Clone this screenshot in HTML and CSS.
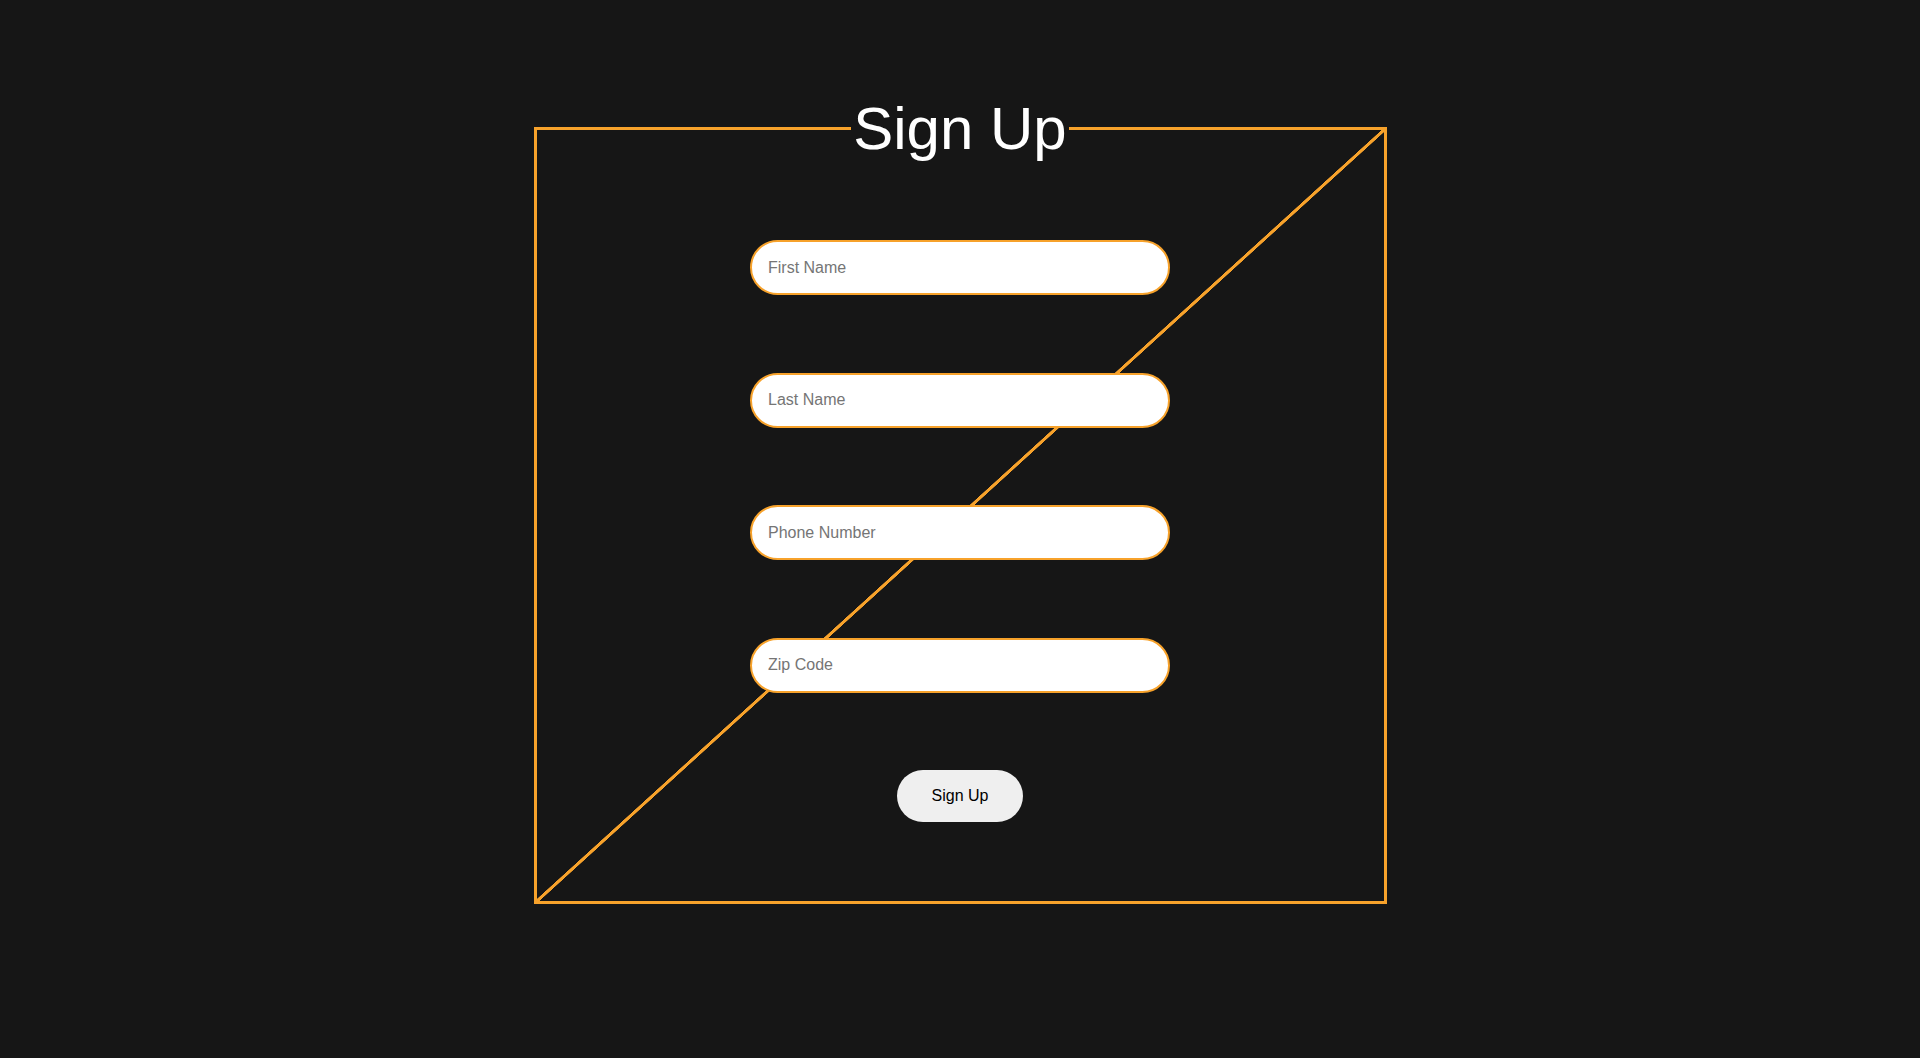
FILE: index.html
```html
<!DOCTYPE html>
<html lang="en">
<head>
<meta charset="utf-8">
<title>Sign Up</title>
<link rel="stylesheet" href="styles.css">
</head>
<body>
<form class="signup">
  <fieldset class="signup-box">
    <legend class="signup-title">Sign Up</legend>
    <div class="fields">
      <input class="field" type="text" placeholder="First Name">
      <input class="field" type="text" placeholder="Last Name">
      <input class="field" type="tel" placeholder="Phone Number">
      <input class="field" type="text" placeholder="Zip Code">
      <button class="submit" type="button">Sign Up</button>
    </div>
  </fieldset>
</form>
</body>
</html>
```
FILE: styles.css
```css
html, body {
  margin: 0;
  padding: 0;
  background: #161616;
  font-family: "Liberation Sans", Arial, sans-serif;
}

.signup {
  display: flex;
  justify-content: center;
  padding-top: 94px;
}

.signup-box {
  box-sizing: border-box;
  width: 853px;
  margin: 0;
  padding: 0;
  border: 3px solid #f7a22b;
  background-image: linear-gradient(to bottom right,
    transparent calc(50% - 1.8px),
    #f7a22b calc(50% - 1.3px),
    #f7a22b calc(50% + 1.3px),
    transparent calc(50% + 1.8px));
}

.signup-title {
  margin: 0 auto;
  padding: 0 2px;
  font-size: 60px;
  line-height: 69px;
  color: #ffffff;
  font-weight: normal;
}

.fields {
  display: flex;
  flex-direction: column;
  align-items: center;
  gap: 77.5px;
  padding: 77px 0 79px;
}

.field {
  box-sizing: border-box;
  width: 420px;
  height: 55px;
  padding: 0 16px;
  border: 2px solid #f7a22b;
  border-radius: 28px;
  background: #ffffff;
  font-family: "Liberation Sans", Arial, sans-serif;
  font-size: 16px;
  color: #000;
  outline: none;
}

.field::placeholder {
  color: #757575;
}

.submit {
  box-sizing: border-box;
  width: 126px;
  height: 52px;
  border: none;
  border-radius: 26px;
  background: #efefef;
  font-family: "Liberation Sans", Arial, sans-serif;
  font-size: 16px;
  color: #000;
}
```
